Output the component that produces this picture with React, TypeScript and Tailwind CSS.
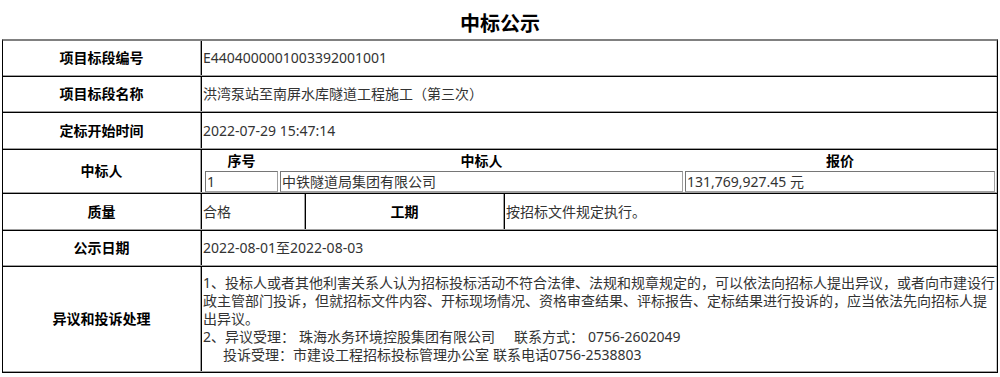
import React from "react";

const FONT = { fontFamily: '"Noto Sans", "Noto Sans CJK SC", sans-serif' };

function Label({ children, w = "w-[198px]" }: { children: React.ReactNode; w?: string }) {
  return (
    <div className={`${w} shrink-0 flex items-center justify-center border-r border-[#a0a0a0] text-[14px] font-bold text-black`}>
      {children}
    </div>
  );
}

function Value({ children }: { children: React.ReactNode }) {
  return (
    <div className="flex-1 flex items-center border-l border-black border-r border-r-[#c8c8c8] pl-[1px] text-[14px] text-[#333] whitespace-nowrap">
      {children}
    </div>
  );
}

function Row({ h, first, children }: { h: string; first?: boolean; children: React.ReactNode }) {
  return (
    <div className={`flex ${h} ${first ? "" : "border-t border-black"} border-b border-b-[#a0a0a0]`}>
      {children}
    </div>
  );
}

export default function App() {
  return (
    <div className="w-[1000px] h-[377px] bg-white leading-[18px]" style={FONT}>
      <div className="h-[39px] flex items-end justify-center pb-[2px]">
        <h1 className="text-[20px] font-bold text-black leading-[26px]">中标公示</h1>
      </div>
      <div className="ml-[2px] w-[996px] border-t-2 border-t-[#808080] border-l border-l-black border-r border-r-black border-b border-b-black">
        <Row h="h-[35px]" first>
          <Label>项目标段编号</Label>
          <Value>E4404000001003392001001</Value>
        </Row>
        <Row h="h-[36px]">
          <Label>项目标段名称</Label>
          <Value>洪湾泵站至南屏水库隧道工程施工（第三次）</Value>
        </Row>
        <Row h="h-[37px]">
          <Label>定标开始时间</Label>
          <Value>2022-07-29 15:47:14</Value>
        </Row>
        <Row h="h-[44px]">
          <Label>中标人</Label>
          <div className="flex-1 flex flex-col border-l border-black border-r border-r-[#c8c8c8] pl-[3px] pr-[1px] text-[14px]">
            <div className="grid grid-cols-[73px_403px_1fr] gap-x-[2px] h-[21px] items-center font-bold text-black">
              <div className="text-center">序号</div>
              <div className="text-center">中标人</div>
              <div className="text-center">报价</div>
            </div>
            <div className="grid grid-cols-[73px_403px_1fr] gap-x-[2px] h-[21px] text-[#333]">
              <div className="border border-[#a0a0a0] border-t-[#767676] border-l-[#767676] pl-[1px] flex items-center">1</div>
              <div className="border border-[#a0a0a0] border-t-[#767676] border-l-[#767676] pl-[1px] flex items-center">中铁隧道局集团有限公司</div>
              <div className="border border-[#a0a0a0] border-t-[#767676] border-l-[#767676] pl-[1px] flex items-center">131,769,927.45 元</div>
            </div>
          </div>
        </Row>
        <Row h="h-[37px]">
          <Label>质量</Label>
          <div className="w-[104px] shrink-0 flex items-center border-l border-black border-r border-r-[#a0a0a0] pl-[1px] text-[14px] text-[#333]">
            合格
          </div>
          <div className="w-[199px] shrink-0 flex items-center justify-center border-l border-black border-r border-r-[#a0a0a0] text-[14px] font-bold text-black">
            工期
          </div>
          <Value>按招标文件规定执行。</Value>
        </Row>
        <Row h="h-[36px]">
          <Label>公示日期</Label>
          <Value>2022-08-01至2022-08-03</Value>
        </Row>
        <Row h="h-[106px]">
          <Label>异议和投诉处理</Label>
          <div className="flex-1 flex flex-col justify-center border-l border-black border-r border-r-[#c8c8c8] pl-[1px] text-[14px] text-[#333] leading-[18px] whitespace-nowrap">
            <div>1、投标人或者其他利害关系人认为招标投标活动不符合法律、法规和规章规定的，可以依法向招标人提出异议，或者向市建设行</div>
            <div>政主管部门投诉，但就招标文件内容、开标现场情况、资格审查结果、评标报告、定标结果进行投诉的，应当依法先向招标人提</div>
            <div>出异议。</div>
            <div>
              2、异议受理：<span className="ml-[4px]">珠海水务环境控股集团有限公司</span>
              <span className="ml-[19px]">联系方式：</span>
              <span className="ml-[4px]">0756-2602049</span>
            </div>
            <div className="pl-[20px]">
              投诉受理：市建设工程招标投标管理办公室<span className="ml-[4px]">联系电话0756-2538803</span>
            </div>
          </div>
        </Row>
      </div>
    </div>
  );
}
